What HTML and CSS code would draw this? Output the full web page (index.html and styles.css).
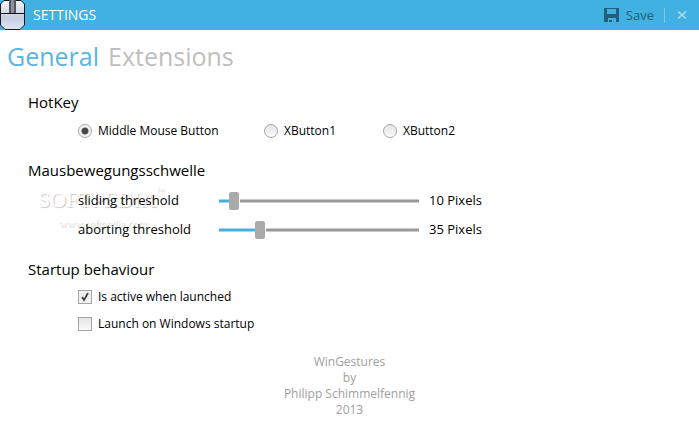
FILE: index.html
```
<!DOCTYPE html>
<html lang="en">
<head>
    <meta charset="UTF-8">
    <meta name="viewport" content="width=device-width, initial-scale=1.0">
    <title>Settings</title>
    <link rel="stylesheet" href="styles.css">
</head>
<body>
<header class="titlebar">
    <svg class="logo" width="25" height="30" viewBox="0 0 25 30" aria-hidden="true">
        <defs>
            <linearGradient id="mouseBody" x1="0" y1="0" x2="0" y2="1">
                <stop offset="0" stop-color="#f4f5fa"/>
                <stop offset="0.6" stop-color="#c6cde0"/>
                <stop offset="1" stop-color="#dfe4f0"/>
            </linearGradient>
        </defs>
        <path d="M4 0.5H21L24.5 4V25L20 29.5H5L0.5 25V4Z" fill="url(#mouseBody)" stroke="#15151a"/>
        <path d="M1 13.5H24" stroke="#15151a"/>
        <rect x="9" y="0" width="7" height="13" fill="#55555c"/>
        <rect x="11" y="0" width="3" height="13" fill="#8f9098"/>
    </svg>
    <h1 class="title">SETTINGS</h1>
    <button class="save" type="button">
        <svg width="15" height="14" viewBox="0 0 15 14" aria-hidden="true">
            <path fill="#22607a" fill-rule="evenodd" d="M0 0H15V14H12V10H4V14H0ZM3 1V6H12V1Z"/>
            <path fill="#22607a" d="M5 12H8V14H5Z"/>
        </svg>
        Save
    </button>
    <button class="close" type="button" aria-label="Close">
        <svg width="10" height="8" viewBox="0 0 10 8" aria-hidden="true">
            <path d="M1 0.5L9 7.5M9 0.5L1 7.5" fill="none" stroke="#a9daf0" stroke-width="1.6"/>
        </svg>
    </button>
</header>

<nav class="tabs">
    <a class="tab active" href="#general">General</a>
    <a class="tab" href="#extensions">Extensions</a>
</nav>

<main class="settings" id="general">
    <section class="section">
        <h2>HotKey</h2>
        <div class="radios">
            <label class="option"><input type="radio" name="hotkey" checked>Middle Mouse Button</label>
            <label class="option"><input type="radio" name="hotkey">XButton1</label>
            <label class="option"><input type="radio" name="hotkey">XButton2</label>
        </div>
    </section>

    <section class="section thresholds">
        <div class="watermark" aria-hidden="true">
            <div class="watermark-name">SOFTPEDIA<sup>™</sup></div>
            <div class="watermark-url">www.softpedia.com</div>
        </div>
        <h2>Mausbewegungsschwelle</h2>
        <div class="sliders">
            <label for="sliding">sliding threshold</label>
            <input type="range" id="sliding" min="1" max="181" value="10" style="--fill: 5%">
            <output for="sliding">10 Pixels</output>
            <label for="aborting">aborting threshold</label>
            <input type="range" id="aborting" min="1" max="181" value="35" style="--fill: 19%">
            <output for="aborting">35 Pixels</output>
        </div>
    </section>

    <section class="section startup">
        <h2>Startup behaviour</h2>
        <div class="checks">
            <label class="option"><input type="checkbox" checked>Is active when launched</label>
            <label class="option"><input type="checkbox">Launch on Windows startup</label>
        </div>
    </section>
</main>

<footer class="about">
    <div>WinGestures</div>
    <div>by</div>
    <div>Philipp Schimmelfennig</div>
    <div>2013</div>
</footer>
</body>
</html>
```
FILE: styles.css
```
body {
    margin: 0;
    background: #fff;
    color: #000;
    font-family: "Open Sans", "Noto Sans", sans-serif;
    font-size: 12px;
}

.titlebar {
    display: flex;
    align-items: center;
    height: 30px;
    background: #41b1e1;
}

.title {
    flex: 1;
    margin: 0 0 0 8px;
    color: #fff;
    font-size: 14px;
    font-weight: 400;
    line-height: 20px;
}

.titlebar button {
    display: flex;
    align-items: center;
    border: none;
    background: none;
    font-family: inherit;
    cursor: pointer;
}

.save {
    gap: 7px;
    height: 15px;
    padding: 0 10px;
    color: #22607a;
    font-size: 13px;
}

.titlebar .close {
    height: 15px;
    padding: 0 12px;
    border-left: 1px solid #7ac8ea;
}

.tabs {
    display: flex;
    gap: 9px;
    padding: 7px 7px 0;
}

.tab {
    color: #bebebe;
    font-size: 25px;
    line-height: 38px;
    text-decoration: none;
}

.tab.active {
    color: #5bb4e4;
}

.settings {
    padding: 16px 28px 0;
}

.section {
    position: relative;
    margin-bottom: 19px;
}

.section.thresholds {
    margin-bottom: 14px;
}

.section.startup {
    margin-bottom: 21px;
}

.section h2 {
    margin: 0;
    font-size: 15px;
    font-weight: 400;
    line-height: 22px;
}

.option {
    display: flex;
    align-items: center;
    gap: 6px;
    line-height: 18px;
}

.radios {
    display: grid;
    grid-template-columns: 186px 119px auto;
    justify-content: start;
    padding: 9px 0 0 50px;
}

.option input {
    appearance: none;
    flex: none;
    width: 14px;
    height: 14px;
    margin: 0;
    border: 1px solid #a6a6a6;
    background: linear-gradient(#e4e4e4, #fafafa);
}

.option input[type="radio"] {
    border-radius: 50%;
}

.option input[type="radio"]:checked {
    background: radial-gradient(circle, #484848 3px, #f4f4f4 4px);
}

.option input[type="checkbox"]:checked {
    background: url("data:image/svg+xml,%3Csvg xmlns='http://www.w3.org/2000/svg' viewBox='0 0 12 12'%3E%3Cpath d='M3 6l2 3 4-7' fill='none' stroke='%23444' stroke-width='1.8'/%3E%3C/svg%3E") #f0f0f0;
}

.sliders {
    position: relative;
    display: grid;
    grid-template-columns: 131px 200px auto;
    column-gap: 10px;
    align-items: center;
    justify-content: start;
    padding: 5px 0 0 50px;
    font-size: 13px;
    line-height: 29px;
}

.sliders input {
    appearance: none;
    width: 100%;
    height: 20px;
    margin: 0;
    background: none;
}

.sliders input::-webkit-slider-runnable-track {
    height: 4px;
    background:
        linear-gradient(rgba(255, 255, 255, 0.5) 1px, transparent 1px 3px, rgba(255, 255, 255, 0.5) 3px),
        linear-gradient(to right, #41b1e1 var(--fill), #999 var(--fill));
}

.sliders input::-webkit-slider-thumb {
    appearance: none;
    width: 10px;
    height: 18px;
    margin-top: -7px;
    border-radius: 2px;
    background: #aaa;
    box-shadow: 1px 0 0 #fff;
}

.watermark {
    position: absolute;
    top: 28px;
    left: 10px;
    color: #fff;
    font-family: "Liberation Serif", serif;
    text-shadow: 1px 1px 1px #c4c4c4;
}

.watermark-name {
    font-size: 22px;
    line-height: 26px;
}

.watermark-name sup {
    font-size: 8px;
    line-height: 8px;
    vertical-align: top;
}

.watermark-url {
    padding-left: 21px;
    font-size: 11px;
    line-height: 20px;
}

.checks {
    display: grid;
    gap: 9px;
    padding: 8px 0 0 50px;
}

.about {
    color: #a0a0a0;
    line-height: 16px;
    text-align: center;
}
```
